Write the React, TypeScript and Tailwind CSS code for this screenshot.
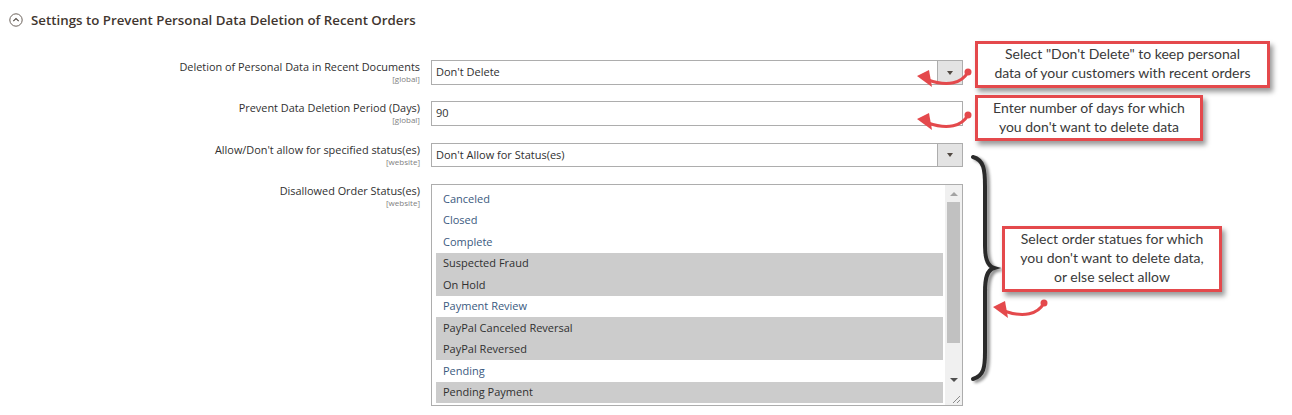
import React from 'react';

const statuses = [
  { label: 'Canceled', selected: false },
  { label: 'Closed', selected: false },
  { label: 'Complete', selected: false },
  { label: 'Suspected Fraud', selected: true },
  { label: 'On Hold', selected: true },
  { label: 'Payment Review', selected: false },
  { label: 'PayPal Canceled Reversal', selected: true },
  { label: 'PayPal Reversed', selected: true },
  { label: 'Pending', selected: false },
  { label: 'Pending Payment', selected: true },
];

function FieldLabel({ text, scope }: { text: string; scope: string }) {
  return (
    <div className="w-[420px] shrink-0 text-right">
      <div className="text-[10.9px] leading-[14px] text-[#303030]">{text}</div>
      <div className="text-[8px] leading-[10px] text-[#808080]">{scope}</div>
    </div>
  );
}

function Select({ value, h }: { value: string; h: string }) {
  return (
    <div className={`ml-[11px] flex w-[532px] border border-[#adadad] bg-white ${h}`}>
      <div className="flex flex-1 items-center pl-[4px] text-[11px] text-[#303030]">{value}</div>
      <div className="flex w-[25px] items-center justify-center border-l border-[#adadad] bg-[#e3e3e3]">
        <span className="h-0 w-0 border-x-[3.5px] border-t-[4px] border-x-transparent border-t-[#514943]" />
      </div>
    </div>
  );
}

function Callout({ className, children }: { className: string; children: React.ReactNode }) {
  return (
    <div
      className={`absolute flex items-center justify-center border-[3px] border-[#e4494c] bg-white pb-[3px] text-center font-['Lato',sans-serif] text-[14px] leading-[19px] text-[#3a3a3a] shadow-[3px_4px_5px_rgba(0,0,0,0.4)] ${className}`}
    >
      <div>{children}</div>
    </div>
  );
}

function Arrow({ dx, dy }: { dx: number; dy: number }) {
  return (
    <g transform={`translate(${dx} ${dy})`}>
      <path d="M968 72 C 962 83, 948 87, 928 80" fill="none" stroke="#e4494c" strokeWidth="3" strokeLinecap="round" />
      <circle cx="968" cy="72" r="3.5" fill="#e4494c" />
      <polygon points="917,76 929,70 932,87" fill="#e4494c" />
    </g>
  );
}

export default function App() {
  return (
    <div className="relative h-[415px] w-full overflow-hidden bg-white font-['Open_Sans',sans-serif]">
      <div className="flex items-center gap-[8px] pl-[9px] pt-[13px]">
        <svg width="14" height="14" viewBox="0 0 14 14">
          <circle cx="7" cy="7" r="6.2" fill="none" stroke="#6b625b" strokeWidth="1" />
          <path d="M4.3 8.2 L7 5.5 L9.7 8.2" fill="none" stroke="#514943" strokeWidth="1.1" />
        </svg>
        <span className="text-[13.3px] font-semibold leading-[14px] text-[#41362f]">
          Settings to Prevent Personal Data Deletion of Recent Orders
        </span>
      </div>

      <div className="mt-[33px] flex flex-col">
        <div className="flex h-[41px] items-start">
          <FieldLabel text="Deletion of Personal Data in Recent Documents" scope="[global]" />
          <Select value="Don't Delete" h="h-[25px]" />
        </div>
        <div className="flex h-[42px] items-start">
          <FieldLabel text="Prevent Data Deletion Period (Days)" scope="[global]" />
          <div className="ml-[11px] flex h-[25px] w-[532px] items-center border border-[#adadad] bg-white pl-[4px] text-[11px] text-[#303030]">
            90
          </div>
        </div>
        <div className="flex h-[41px] items-start">
          <FieldLabel text="Allow/Don't allow for specified status(es)" scope="[website]" />
          <Select value="Don't Allow for Status(es)" h="h-[24px]" />
        </div>
        <div className="flex items-start">
          <FieldLabel text="Disallowed Order Status(es)" scope="[website]" />
          <div className="ml-[11px] flex h-[222px] w-[532px] border border-[#adadad] bg-white">
            <div className="flex-1 pl-[4px] pr-[2px] pt-[3px]">
              {statuses.map((s) => (
                <div
                  key={s.label}
                  className={`flex h-[21.5px] items-center pl-[7px] text-[11px] ${
                    s.selected ? 'bg-[#cccccc] text-[#303030]' : 'text-[#3b5a80]'
                  }`}
                >
                  {s.label}
                </div>
              ))}
            </div>
            <div className="flex w-[17px] flex-col bg-[#f0f0f0]">
              <div className="flex h-[17px] items-center justify-center">
                <span className="h-0 w-0 border-x-[4px] border-b-[4px] border-x-transparent border-b-[#a3a3a3]" />
              </div>
              <div className="flex h-[169px] flex-col items-center">
                <div className="h-[141px] w-[13px] bg-[#c1c1c1]" />
              </div>
              <div className="flex h-[17px] items-center justify-center">
                <span className="h-0 w-0 border-x-[4px] border-t-[4px] border-x-transparent border-t-[#505050]" />
              </div>
              <div className="flex h-[17px] items-end justify-end bg-[#f0f0f0] pb-[1px] pr-[1px]">
                <svg width="10" height="10" viewBox="0 0 10 10">
                  <path d="M9 2 L2 9 M9 6 L6 9" stroke="#8a8a8a" strokeWidth="1" />
                </svg>
              </div>
            </div>
          </div>
        </div>
      </div>

      <svg className="pointer-events-none absolute left-0 top-0" width="1292" height="415" viewBox="0 0 1292 415">
        <defs>
          <filter id="braceShadow" x="-50%" y="-10%" width="200%" height="120%">
            <feGaussianBlur in="SourceAlpha" stdDeviation="1.6" />
            <feOffset dx="3" dy="2" result="blur" />
            <feComponentTransfer>
              <feFuncA type="linear" slope="0.45" />
            </feComponentTransfer>
            <feMerge>
              <feMergeNode />
              <feMergeNode in="SourceGraphic" />
            </feMerge>
          </filter>
        </defs>
        <path
          d="M973 157 C 984 160, 985 170, 985 186 L 985 246 C 985 258, 987 266, 994 268 C 987 270, 985 278, 985 292 L 985 352 C 985 367, 984 376, 973 379"
          fill="none"
          stroke="#2b2b2b"
          strokeWidth="4"
          strokeLinecap="round"
          filter="url(#braceShadow)"
        />
        <Arrow dx={0} dy={0} />
        <Arrow dx={0} dy={43} />
        <Arrow dx={76} dy={231} />
      </svg>

      <Callout className="left-[975px] top-[41px] h-[47px] w-[295px]">
        Select "Don't Delete" to keep personal
        <br />
        data of your customers with recent orders
      </Callout>
      <Callout className="left-[975px] top-[95px] h-[46px] w-[228px]">
        Enter number of days for which
        <br />
        you don't want to delete data
      </Callout>
      <Callout className="left-[1002px] top-[226px] h-[66px] w-[220px]">
        Select order statues for which
        <br />
        you don't want to delete data,
        <br />
        or else select allow
      </Callout>
    </div>
  );
}
